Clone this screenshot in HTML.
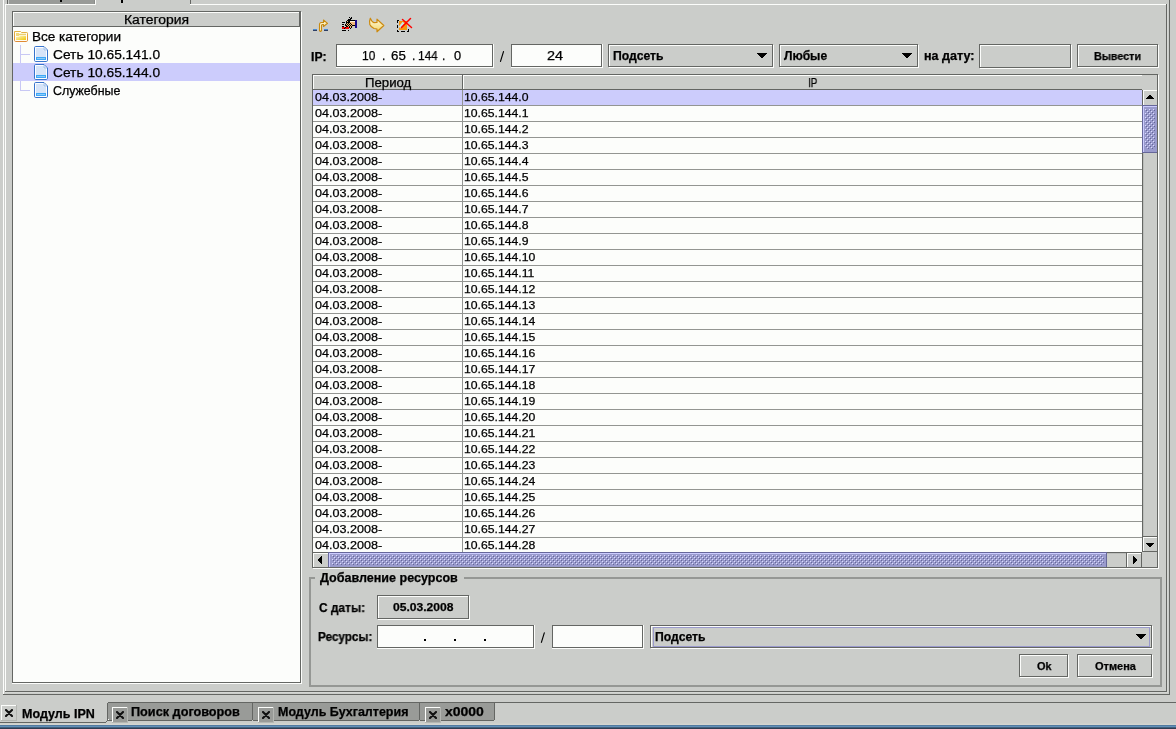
<!DOCTYPE html>
<html><head><meta charset="utf-8"><style>
html,body{margin:0;padding:0;width:1176px;height:729px;overflow:hidden;background:#cbcdca;position:relative}
body>div,body>svg,body>span{position:absolute}
.t{font-family:"Liberation Sans",sans-serif;white-space:pre;color:#000;transform-origin:0 0;will-change:transform;-webkit-text-stroke:0.25px #000}
</style></head><body>
<svg width="0" height="0" style="left:0;top:0"><defs><pattern id="bumps" width="4" height="4" patternUnits="userSpaceOnUse"><rect x="0" y="0" width="1" height="1" fill="#dcdcff"/><rect x="1" y="1" width="1" height="1" fill="#66679a"/><rect x="2" y="2" width="1" height="1" fill="#dcdcff"/><rect x="3" y="3" width="1" height="1" fill="#66679a"/></pattern></defs></svg>
<div style="left:3px;top:0px;width:1px;height:695px;background:#fcfdfb;"></div><div style="left:3px;top:694px;width:1167px;height:1px;background:#646663;"></div><div style="left:1169px;top:0px;width:1px;height:695px;background:#646663;"></div><div style="left:1167px;top:4px;width:1px;height:689px;background:#d5d7d4;"></div><div style="left:5px;top:692px;width:1163px;height:1px;background:#d5d7d4;"></div><div style="left:5px;top:4px;width:1px;height:688px;background:#fcfdfb;"></div><div style="left:5px;top:691px;width:1162px;height:1px;background:#646663;"></div><div style="left:1166px;top:4px;width:1px;height:688px;background:#646663;"></div><div style="left:7px;top:0px;width:88px;height:4px;background:#999b98;"></div><div style="left:7px;top:0px;width:1px;height:4px;background:#646663;"></div><div style="left:8px;top:0px;width:1px;height:4px;background:#c9cbc8;"></div><div style="left:94px;top:0px;width:1px;height:4px;background:#8a8c89;"></div><div style="left:95px;top:0px;width:1px;height:5px;background:#fcfdfb;"></div><div style="left:5px;top:4px;width:91px;height:1px;background:#fcfdfb;"></div><div style="left:190px;top:4px;width:976px;height:1px;background:#fcfdfb;"></div><div style="left:190px;top:0px;width:1px;height:4px;background:#646663;"></div><div style="left:60px;top:0px;width:2px;height:2px;background:#000;"></div><div style="left:121px;top:0px;width:2px;height:3px;background:#000;"></div><div style="left:13px;top:12px;width:287px;height:670px;background:#fcfdfb;"></div><div style="left:12px;top:11px;width:289px;height:1px;background:#646663;"></div><div style="left:12px;top:682px;width:289px;height:1px;background:#646663;"></div><div style="left:12px;top:11px;width:1px;height:672px;background:#646663;"></div><div style="left:300px;top:11px;width:1px;height:672px;background:#646663;"></div><div style="left:301px;top:12px;width:1px;height:672px;background:#fcfdfb;"></div><div style="left:12px;top:683px;width:290px;height:1px;background:#fcfdfb;"></div><div style="left:13px;top:12px;width:287px;height:15px;background:#cbcdca;"></div><div style="left:13px;top:12px;width:286px;height:1px;background:#fcfdfb;"></div><div style="left:13px;top:12px;width:1px;height:14px;background:#fcfdfb;"></div><div style="left:13px;top:26px;width:287px;height:1px;background:#646663;"></div><div style="left:299px;top:12px;width:1px;height:15px;background:#646663;"></div><div style="left:13px;top:63px;width:287px;height:18px;background:#ccccfc;"></div><div style="left:20px;top:45px;width:1px;height:18px;background:#c8c8f4;"></div><div style="left:21px;top:54px;width:9px;height:1px;background:#c8c8f4;"></div><div style="left:20px;top:81px;width:1px;height:10px;background:#c8c8f4;"></div><div style="left:21px;top:90px;width:9px;height:1px;background:#c8c8f4;"></div><div style="left:336px;top:44px;width:158px;height:24px;background:#fcfdfb;"></div><div style="left:337px;top:45px;width:157px;height:1px;background:#fcfdfb;"></div><div style="left:337px;top:67px;width:157px;height:1px;background:#fcfdfb;"></div><div style="left:337px;top:45px;width:1px;height:23px;background:#fcfdfb;"></div><div style="left:493px;top:45px;width:1px;height:23px;background:#fcfdfb;"></div><div style="left:336px;top:44px;width:157px;height:1px;background:#646663;"></div><div style="left:336px;top:66px;width:157px;height:1px;background:#646663;"></div><div style="left:336px;top:44px;width:1px;height:23px;background:#646663;"></div><div style="left:492px;top:44px;width:1px;height:23px;background:#646663;"></div><div style="left:338px;top:46px;width:154px;height:20px;background:#fcfdfb;"></div><svg style="left:496px;top:48px" width="12" height="16"><line x1="7.5" y1="3.6" x2="4.5" y2="13.4" stroke="#000" stroke-width="1.15" stroke-linecap="round"/></svg><div style="left:511px;top:44px;width:92px;height:24px;background:#fcfdfb;"></div><div style="left:512px;top:45px;width:91px;height:1px;background:#fcfdfb;"></div><div style="left:512px;top:67px;width:91px;height:1px;background:#fcfdfb;"></div><div style="left:512px;top:45px;width:1px;height:23px;background:#fcfdfb;"></div><div style="left:602px;top:45px;width:1px;height:23px;background:#fcfdfb;"></div><div style="left:511px;top:44px;width:91px;height:1px;background:#646663;"></div><div style="left:511px;top:66px;width:91px;height:1px;background:#646663;"></div><div style="left:511px;top:44px;width:1px;height:23px;background:#646663;"></div><div style="left:601px;top:44px;width:1px;height:23px;background:#646663;"></div><div style="left:513px;top:46px;width:88px;height:20px;background:#fcfdfb;"></div><div style="left:608px;top:44px;width:166px;height:24px;background:#cbcdca;"></div><div style="left:609px;top:45px;width:165px;height:1px;background:#fcfdfb;"></div><div style="left:609px;top:67px;width:165px;height:1px;background:#fcfdfb;"></div><div style="left:609px;top:45px;width:1px;height:23px;background:#fcfdfb;"></div><div style="left:773px;top:45px;width:1px;height:23px;background:#fcfdfb;"></div><div style="left:608px;top:44px;width:165px;height:1px;background:#646663;"></div><div style="left:608px;top:66px;width:165px;height:1px;background:#646663;"></div><div style="left:608px;top:44px;width:1px;height:23px;background:#646663;"></div><div style="left:772px;top:44px;width:1px;height:23px;background:#646663;"></div><div style="left:610px;top:46px;width:162px;height:20px;background:#cbcdca;"></div><div style="left:757px;top:53px;width:10px;height:1px;background:#000;"></div><div style="left:758px;top:54px;width:8px;height:1px;background:#000;"></div><div style="left:759px;top:55px;width:6px;height:1px;background:#000;"></div><div style="left:760px;top:56px;width:4px;height:1px;background:#000;"></div><div style="left:761px;top:57px;width:2px;height:1px;background:#000;"></div><div style="left:779px;top:44px;width:140px;height:24px;background:#cbcdca;"></div><div style="left:780px;top:45px;width:139px;height:1px;background:#fcfdfb;"></div><div style="left:780px;top:67px;width:139px;height:1px;background:#fcfdfb;"></div><div style="left:780px;top:45px;width:1px;height:23px;background:#fcfdfb;"></div><div style="left:918px;top:45px;width:1px;height:23px;background:#fcfdfb;"></div><div style="left:779px;top:44px;width:139px;height:1px;background:#646663;"></div><div style="left:779px;top:66px;width:139px;height:1px;background:#646663;"></div><div style="left:779px;top:44px;width:1px;height:23px;background:#646663;"></div><div style="left:917px;top:44px;width:1px;height:23px;background:#646663;"></div><div style="left:781px;top:46px;width:136px;height:20px;background:#cbcdca;"></div><div style="left:902px;top:53px;width:10px;height:1px;background:#000;"></div><div style="left:903px;top:54px;width:8px;height:1px;background:#000;"></div><div style="left:904px;top:55px;width:6px;height:1px;background:#000;"></div><div style="left:905px;top:56px;width:4px;height:1px;background:#000;"></div><div style="left:906px;top:57px;width:2px;height:1px;background:#000;"></div><div style="left:979px;top:44px;width:93px;height:25px;background:#cbcdca;"></div><div style="left:980px;top:45px;width:92px;height:1px;background:#fcfdfb;"></div><div style="left:980px;top:68px;width:92px;height:1px;background:#fcfdfb;"></div><div style="left:980px;top:45px;width:1px;height:24px;background:#fcfdfb;"></div><div style="left:1071px;top:45px;width:1px;height:24px;background:#fcfdfb;"></div><div style="left:979px;top:44px;width:92px;height:1px;background:#646663;"></div><div style="left:979px;top:67px;width:92px;height:1px;background:#646663;"></div><div style="left:979px;top:44px;width:1px;height:24px;background:#646663;"></div><div style="left:1070px;top:44px;width:1px;height:24px;background:#646663;"></div><div style="left:981px;top:46px;width:89px;height:21px;background:#cbcdca;"></div><div style="left:1077px;top:44px;width:82px;height:24px;background:#cbcdca;"></div><div style="left:1078px;top:45px;width:81px;height:1px;background:#fcfdfb;"></div><div style="left:1078px;top:67px;width:81px;height:1px;background:#fcfdfb;"></div><div style="left:1078px;top:45px;width:1px;height:23px;background:#fcfdfb;"></div><div style="left:1158px;top:45px;width:1px;height:23px;background:#fcfdfb;"></div><div style="left:1077px;top:44px;width:81px;height:1px;background:#646663;"></div><div style="left:1077px;top:66px;width:81px;height:1px;background:#646663;"></div><div style="left:1077px;top:44px;width:1px;height:23px;background:#646663;"></div><div style="left:1157px;top:44px;width:1px;height:23px;background:#646663;"></div><div style="left:1079px;top:46px;width:78px;height:20px;background:#cbcdca;"></div><div style="left:313px;top:75px;width:844px;height:492px;background:#fcfdfb;"></div><div style="left:312px;top:74px;width:846px;height:1px;background:#646663;"></div><div style="left:312px;top:567px;width:846px;height:1px;background:#646663;"></div><div style="left:312px;top:74px;width:1px;height:494px;background:#646663;"></div><div style="left:1157px;top:74px;width:1px;height:494px;background:#646663;"></div><div style="left:1158px;top:75px;width:1px;height:494px;background:#fcfdfb;"></div><div style="left:313px;top:568px;width:846px;height:1px;background:#fcfdfb;"></div><div style="left:313px;top:75px;width:844px;height:15px;background:#cbcdca;"></div><div style="left:313px;top:75px;width:829px;height:1px;background:#fcfdfb;"></div><div style="left:313px;top:75px;width:1px;height:14px;background:#fcfdfb;"></div><div style="left:313px;top:89px;width:829px;height:1px;background:#646663;"></div><div style="left:462px;top:75px;width:1px;height:15px;background:#646663;"></div><div style="left:463px;top:76px;width:1px;height:13px;background:#fcfdfb;"></div><div style="left:313px;top:90px;width:829px;height:15px;background:#ccccfc;"></div><div style="left:313px;top:105px;width:829px;height:1px;background:#939592;"></div><div style="left:313px;top:121px;width:829px;height:1px;background:#939592;"></div><div style="left:313px;top:137px;width:829px;height:1px;background:#939592;"></div><div style="left:313px;top:153px;width:829px;height:1px;background:#939592;"></div><div style="left:313px;top:169px;width:829px;height:1px;background:#939592;"></div><div style="left:313px;top:185px;width:829px;height:1px;background:#939592;"></div><div style="left:313px;top:201px;width:829px;height:1px;background:#939592;"></div><div style="left:313px;top:217px;width:829px;height:1px;background:#939592;"></div><div style="left:313px;top:233px;width:829px;height:1px;background:#939592;"></div><div style="left:313px;top:249px;width:829px;height:1px;background:#939592;"></div><div style="left:313px;top:265px;width:829px;height:1px;background:#939592;"></div><div style="left:313px;top:281px;width:829px;height:1px;background:#939592;"></div><div style="left:313px;top:297px;width:829px;height:1px;background:#939592;"></div><div style="left:313px;top:313px;width:829px;height:1px;background:#939592;"></div><div style="left:313px;top:329px;width:829px;height:1px;background:#939592;"></div><div style="left:313px;top:345px;width:829px;height:1px;background:#939592;"></div><div style="left:313px;top:361px;width:829px;height:1px;background:#939592;"></div><div style="left:313px;top:377px;width:829px;height:1px;background:#939592;"></div><div style="left:313px;top:393px;width:829px;height:1px;background:#939592;"></div><div style="left:313px;top:409px;width:829px;height:1px;background:#939592;"></div><div style="left:313px;top:425px;width:829px;height:1px;background:#939592;"></div><div style="left:313px;top:441px;width:829px;height:1px;background:#939592;"></div><div style="left:313px;top:457px;width:829px;height:1px;background:#939592;"></div><div style="left:313px;top:473px;width:829px;height:1px;background:#939592;"></div><div style="left:313px;top:489px;width:829px;height:1px;background:#939592;"></div><div style="left:313px;top:505px;width:829px;height:1px;background:#939592;"></div><div style="left:313px;top:521px;width:829px;height:1px;background:#939592;"></div><div style="left:313px;top:537px;width:829px;height:1px;background:#939592;"></div><div style="left:462px;top:90px;width:1px;height:462px;background:#939592;"></div><div style="left:1142px;top:90px;width:15px;height:462px;background:#cbcdca;"></div><div style="left:1142px;top:90px;width:1px;height:462px;background:#646663;"></div><div style="left:1143px;top:105px;width:1px;height:431px;background:#babcb9;"></div><div style="left:1143px;top:90px;width:14px;height:1px;background:#fcfdfb;"></div><div style="left:1143px;top:90px;width:1px;height:15px;background:#fcfdfb;"></div><div style="left:1149px;top:95px;width:2px;height:1px;background:#000;"></div><div style="left:1148px;top:96px;width:4px;height:1px;background:#000;"></div><div style="left:1147px;top:97px;width:6px;height:1px;background:#000;"></div><div style="left:1146px;top:98px;width:8px;height:1px;background:#000;"></div><div style="left:1142px;top:105px;width:15px;height:48px;background:#9a9bcd;"></div><div style="left:1142px;top:105px;width:15px;height:1px;background:#66679a;"></div><div style="left:1142px;top:105px;width:1px;height:48px;background:#66679a;"></div><div style="left:1142px;top:152px;width:15px;height:1px;background:#66679a;"></div><div style="left:1143px;top:106px;width:14px;height:1px;background:#ccccff;"></div><div style="left:1143px;top:106px;width:1px;height:46px;background:#ccccff;"></div><svg style="left:1145px;top:109px" width="10" height="40"><rect width="10" height="40" fill="url(#bumps)"/></svg><div style="left:1142px;top:536px;width:15px;height:1px;background:#646663;"></div><div style="left:1143px;top:537px;width:14px;height:1px;background:#fcfdfb;"></div><div style="left:1143px;top:537px;width:1px;height:15px;background:#fcfdfb;"></div><div style="left:1142px;top:551px;width:15px;height:1px;background:#646663;"></div><div style="left:1146px;top:543px;width:8px;height:1px;background:#000;"></div><div style="left:1147px;top:544px;width:6px;height:1px;background:#000;"></div><div style="left:1148px;top:545px;width:4px;height:1px;background:#000;"></div><div style="left:1149px;top:546px;width:2px;height:1px;background:#000;"></div><div style="left:313px;top:552px;width:844px;height:15px;background:#cbcdca;"></div><div style="left:313px;top:552px;width:844px;height:1px;background:#646663;"></div><div style="left:328px;top:553px;width:798px;height:1px;background:#babcb9;"></div><div style="left:313px;top:553px;width:15px;height:1px;background:#fcfdfb;"></div><div style="left:313px;top:553px;width:1px;height:14px;background:#fcfdfb;"></div><div style="left:318px;top:559px;width:1px;height:2px;background:#000;"></div><div style="left:319px;top:558px;width:1px;height:4px;background:#000;"></div><div style="left:320px;top:557px;width:1px;height:6px;background:#000;"></div><div style="left:321px;top:556px;width:1px;height:8px;background:#000;"></div><div style="left:328px;top:552px;width:779px;height:15px;background:#9a9bcd;"></div><div style="left:328px;top:552px;width:779px;height:1px;background:#66679a;"></div><div style="left:328px;top:552px;width:1px;height:15px;background:#66679a;"></div><div style="left:1106px;top:552px;width:1px;height:15px;background:#66679a;"></div><div style="left:329px;top:553px;width:777px;height:1px;background:#ccccff;"></div><div style="left:329px;top:553px;width:1px;height:14px;background:#ccccff;"></div><svg style="left:332px;top:555px" width="772" height="10"><rect width="772" height="10" fill="url(#bumps)"/></svg><div style="left:1126px;top:552px;width:1px;height:15px;background:#646663;"></div><div style="left:1127px;top:553px;width:1px;height:14px;background:#fcfdfb;"></div><div style="left:1127px;top:553px;width:15px;height:1px;background:#fcfdfb;"></div><div style="left:1141px;top:552px;width:1px;height:15px;background:#646663;"></div><div style="left:1133px;top:556px;width:1px;height:8px;background:#000;"></div><div style="left:1134px;top:557px;width:1px;height:6px;background:#000;"></div><div style="left:1135px;top:558px;width:1px;height:4px;background:#000;"></div><div style="left:1136px;top:559px;width:1px;height:2px;background:#000;"></div><div style="left:1142px;top:552px;width:15px;height:15px;background:#cbcdca;"></div><div style="left:309px;top:577px;width:2px;height:110px;background:#959794;"></div><div style="left:1160px;top:577px;width:2px;height:110px;background:#959794;"></div><div style="left:309px;top:685px;width:853px;height:2px;background:#959794;"></div><div style="left:309px;top:577px;width:6px;height:2px;background:#959794;"></div><div style="left:464px;top:577px;width:698px;height:2px;background:#959794;"></div><div style="left:377px;top:595px;width:93px;height:25px;background:#cbcdca;"></div><div style="left:378px;top:596px;width:92px;height:1px;background:#fcfdfb;"></div><div style="left:378px;top:619px;width:92px;height:1px;background:#fcfdfb;"></div><div style="left:378px;top:596px;width:1px;height:24px;background:#fcfdfb;"></div><div style="left:469px;top:596px;width:1px;height:24px;background:#fcfdfb;"></div><div style="left:377px;top:595px;width:92px;height:1px;background:#646663;"></div><div style="left:377px;top:618px;width:92px;height:1px;background:#646663;"></div><div style="left:377px;top:595px;width:1px;height:24px;background:#646663;"></div><div style="left:468px;top:595px;width:1px;height:24px;background:#646663;"></div><div style="left:379px;top:597px;width:89px;height:21px;background:#cbcdca;"></div><div style="left:377px;top:625px;width:158px;height:24px;background:#fcfdfb;"></div><div style="left:378px;top:626px;width:157px;height:1px;background:#fcfdfb;"></div><div style="left:378px;top:648px;width:157px;height:1px;background:#fcfdfb;"></div><div style="left:378px;top:626px;width:1px;height:23px;background:#fcfdfb;"></div><div style="left:534px;top:626px;width:1px;height:23px;background:#fcfdfb;"></div><div style="left:377px;top:625px;width:157px;height:1px;background:#646663;"></div><div style="left:377px;top:647px;width:157px;height:1px;background:#646663;"></div><div style="left:377px;top:625px;width:1px;height:23px;background:#646663;"></div><div style="left:533px;top:625px;width:1px;height:23px;background:#646663;"></div><div style="left:379px;top:627px;width:154px;height:20px;background:#fcfdfb;"></div><div style="left:424px;top:639px;width:2px;height:2px;background:#000;"></div><div style="left:454px;top:639px;width:2px;height:2px;background:#000;"></div><div style="left:484px;top:639px;width:2px;height:2px;background:#000;"></div><svg style="left:537px;top:629px" width="12" height="16"><line x1="7.3" y1="3.8" x2="4.4" y2="13.3" stroke="#000" stroke-width="1.15" stroke-linecap="round"/></svg><div style="left:552px;top:625px;width:92px;height:24px;background:#fcfdfb;"></div><div style="left:553px;top:626px;width:91px;height:1px;background:#fcfdfb;"></div><div style="left:553px;top:648px;width:91px;height:1px;background:#fcfdfb;"></div><div style="left:553px;top:626px;width:1px;height:23px;background:#fcfdfb;"></div><div style="left:643px;top:626px;width:1px;height:23px;background:#fcfdfb;"></div><div style="left:552px;top:625px;width:91px;height:1px;background:#646663;"></div><div style="left:552px;top:647px;width:91px;height:1px;background:#646663;"></div><div style="left:552px;top:625px;width:1px;height:23px;background:#646663;"></div><div style="left:642px;top:625px;width:1px;height:23px;background:#646663;"></div><div style="left:554px;top:627px;width:88px;height:20px;background:#fcfdfb;"></div><div style="left:650px;top:625px;width:503px;height:24px;background:#cbcdca;"></div><div style="left:651px;top:626px;width:502px;height:1px;background:#fcfdfb;"></div><div style="left:651px;top:648px;width:502px;height:1px;background:#fcfdfb;"></div><div style="left:651px;top:626px;width:1px;height:23px;background:#fcfdfb;"></div><div style="left:1152px;top:626px;width:1px;height:23px;background:#fcfdfb;"></div><div style="left:650px;top:625px;width:502px;height:1px;background:#646663;"></div><div style="left:650px;top:647px;width:502px;height:1px;background:#646663;"></div><div style="left:650px;top:625px;width:1px;height:23px;background:#646663;"></div><div style="left:1151px;top:625px;width:1px;height:23px;background:#646663;"></div><div style="left:652px;top:627px;width:499px;height:20px;background:#cbcdca;"></div><div style="left:653px;top:627px;width:497px;height:1px;background:#9999cc;"></div><div style="left:653px;top:646px;width:497px;height:1px;background:#9999cc;"></div><div style="left:653px;top:627px;width:1px;height:20px;background:#9999cc;"></div><div style="left:1149px;top:627px;width:1px;height:20px;background:#9999cc;"></div><div style="left:1136px;top:634px;width:10px;height:1px;background:#000;"></div><div style="left:1137px;top:635px;width:8px;height:1px;background:#000;"></div><div style="left:1138px;top:636px;width:6px;height:1px;background:#000;"></div><div style="left:1139px;top:637px;width:4px;height:1px;background:#000;"></div><div style="left:1140px;top:638px;width:2px;height:1px;background:#000;"></div><div style="left:1019px;top:654px;width:50px;height:24px;background:#cbcdca;"></div><div style="left:1020px;top:655px;width:49px;height:1px;background:#fcfdfb;"></div><div style="left:1020px;top:677px;width:49px;height:1px;background:#fcfdfb;"></div><div style="left:1020px;top:655px;width:1px;height:23px;background:#fcfdfb;"></div><div style="left:1068px;top:655px;width:1px;height:23px;background:#fcfdfb;"></div><div style="left:1019px;top:654px;width:49px;height:1px;background:#646663;"></div><div style="left:1019px;top:676px;width:49px;height:1px;background:#646663;"></div><div style="left:1019px;top:654px;width:1px;height:23px;background:#646663;"></div><div style="left:1067px;top:654px;width:1px;height:23px;background:#646663;"></div><div style="left:1021px;top:656px;width:46px;height:20px;background:#cbcdca;"></div><div style="left:1077px;top:654px;width:76px;height:24px;background:#cbcdca;"></div><div style="left:1078px;top:655px;width:75px;height:1px;background:#fcfdfb;"></div><div style="left:1078px;top:677px;width:75px;height:1px;background:#fcfdfb;"></div><div style="left:1078px;top:655px;width:1px;height:23px;background:#fcfdfb;"></div><div style="left:1152px;top:655px;width:1px;height:23px;background:#fcfdfb;"></div><div style="left:1077px;top:654px;width:75px;height:1px;background:#646663;"></div><div style="left:1077px;top:676px;width:75px;height:1px;background:#646663;"></div><div style="left:1077px;top:654px;width:1px;height:23px;background:#646663;"></div><div style="left:1151px;top:654px;width:1px;height:23px;background:#646663;"></div><div style="left:1079px;top:656px;width:72px;height:20px;background:#cbcdca;"></div><div style="left:108px;top:702px;width:1069px;height:1px;background:#646663;"></div><div style="left:107px;top:703px;width:146px;height:17px;background:#999b98;"></div><div style="left:107px;top:720px;width:145px;height:1px;background:#646663;"></div><div style="left:252px;top:703px;width:1px;height:17px;background:#646663;"></div><div style="left:112px;top:707px;width:16px;height:16px;background:#999b98;"></div><div style="left:112px;top:707px;width:16px;height:1px;background:#fcfdfb;"></div><div style="left:112px;top:707px;width:1px;height:16px;background:#fcfdfb;"></div><div style="left:112px;top:722px;width:16px;height:1px;background:#b4b6b2;"></div><div style="left:127px;top:707px;width:1px;height:16px;background:#b4b6b2;"></div><svg style="left:116px;top:711px" width="8" height="8"><path d="M1,1 L7,7 M7,1 L1,7" stroke="#111" stroke-width="2.1" stroke-linecap="round"/></svg><div style="left:253px;top:703px;width:1px;height:17px;background:#fcfdfb;"></div><div style="left:253px;top:703px;width:167px;height:17px;background:#999b98;"></div><div style="left:253px;top:720px;width:166px;height:1px;background:#646663;"></div><div style="left:419px;top:703px;width:1px;height:17px;background:#646663;"></div><div style="left:258px;top:707px;width:16px;height:16px;background:#999b98;"></div><div style="left:258px;top:707px;width:16px;height:1px;background:#fcfdfb;"></div><div style="left:258px;top:707px;width:1px;height:16px;background:#fcfdfb;"></div><div style="left:258px;top:722px;width:16px;height:1px;background:#b4b6b2;"></div><div style="left:273px;top:707px;width:1px;height:16px;background:#b4b6b2;"></div><svg style="left:262px;top:711px" width="8" height="8"><path d="M1,1 L7,7 M7,1 L1,7" stroke="#111" stroke-width="2.1" stroke-linecap="round"/></svg><div style="left:420px;top:703px;width:1px;height:17px;background:#fcfdfb;"></div><div style="left:420px;top:703px;width:75px;height:17px;background:#999b98;"></div><div style="left:420px;top:720px;width:74px;height:1px;background:#646663;"></div><div style="left:494px;top:703px;width:1px;height:17px;background:#646663;"></div><div style="left:425px;top:707px;width:16px;height:16px;background:#999b98;"></div><div style="left:425px;top:707px;width:16px;height:1px;background:#fcfdfb;"></div><div style="left:425px;top:707px;width:1px;height:16px;background:#fcfdfb;"></div><div style="left:425px;top:722px;width:16px;height:1px;background:#b4b6b2;"></div><div style="left:440px;top:707px;width:1px;height:16px;background:#b4b6b2;"></div><svg style="left:429px;top:711px" width="8" height="8"><path d="M1,1 L7,7 M7,1 L1,7" stroke="#111" stroke-width="2.1" stroke-linecap="round"/></svg><div style="left:107px;top:703px;width:1px;height:17px;background:#646663;"></div><div style="left:0px;top:722px;width:106px;height:1px;background:#646663;"></div><div style="left:106px;top:721px;width:1px;height:1px;background:#646663;"></div><div style="left:108px;top:719px;width:1px;height:1px;background:#fcfdfb;"></div><div style="left:1px;top:705px;width:16px;height:16px;background:#cbcdca;"></div><div style="left:1px;top:705px;width:16px;height:1px;background:#fcfdfb;"></div><div style="left:1px;top:705px;width:1px;height:16px;background:#fcfdfb;"></div><div style="left:1px;top:720px;width:16px;height:1px;background:#b4b6b2;"></div><div style="left:16px;top:705px;width:1px;height:16px;background:#b4b6b2;"></div><svg style="left:5px;top:709px" width="8" height="8"><path d="M1,1 L7,7 M7,1 L1,7" stroke="#111" stroke-width="2.1" stroke-linecap="round"/></svg><div style="left:0px;top:723px;width:1177px;height:1px;background:#cfd1cc;"></div><div style="left:0px;top:724px;width:1177px;height:1px;background:#d4d5d0;"></div><div style="left:0px;top:725px;width:1177px;height:1px;background:#527aa0;"></div><div style="left:0px;top:726px;width:1177px;height:1px;background:#6292b9;"></div><div style="left:0px;top:727px;width:1177px;height:1px;background:#445f7d;"></div><div style="left:0px;top:728px;width:1177px;height:1px;background:#2e3d52;"></div><span class="t" style="left:124.04px;top:14px;font-size:12px;line-height:12px;font-weight:400;transform:scaleX(1.1593)">Категория</span><span class="t" style="left:32.47px;top:31px;font-size:12px;line-height:12px;font-weight:400;transform:scaleX(1.1286)">Все категории</span><span class="t" style="left:52.65px;top:49px;font-size:12px;line-height:12px;font-weight:400;transform:scaleX(1.1457)">Сеть 10.65.141.0</span><span class="t" style="left:52.65px;top:67px;font-size:12px;line-height:12px;font-weight:400;transform:scaleX(1.1457)">Сеть 10.65.144.0</span><span class="t" style="left:52.77px;top:85px;font-size:12px;line-height:12px;font-weight:400;transform:scaleX(1.0328)">Служебные</span><span class="t" style="left:311.38px;top:51px;font-size:12px;line-height:12px;font-weight:700;transform:scaleX(1.0154)">IP:</span><span class="t" style="left:361.71px;top:50px;font-size:12px;line-height:12px;font-weight:400;transform:scaleX(0.9917)">10</span><span class="t" style="left:381.80px;top:50px;font-size:12px;line-height:12px;font-weight:400;transform:scaleX(1.0000)">.</span><span class="t" style="left:390.59px;top:50px;font-size:12px;line-height:12px;font-weight:400;transform:scaleX(1.1083)">65</span><span class="t" style="left:411.70px;top:50px;font-size:12px;line-height:12px;font-weight:400;transform:scaleX(1.0000)">.</span><span class="t" style="left:418.12px;top:50px;font-size:12px;line-height:12px;font-weight:400;transform:scaleX(0.9842)">144</span><span class="t" style="left:441.50px;top:50px;font-size:12px;line-height:12px;font-weight:400;transform:scaleX(1.0000)">.</span><span class="t" style="left:454.40px;top:50px;font-size:12px;line-height:12px;font-weight:400;transform:scaleX(1.0667)">0</span><span class="t" style="left:547.40px;top:50px;font-size:12px;line-height:12px;font-weight:400;transform:scaleX(1.2000)">24</span><span class="t" style="left:612.98px;top:50px;font-size:12px;line-height:12px;font-weight:700;transform:scaleX(1.0167)">Подсеть</span><span class="t" style="left:784.00px;top:50px;font-size:12px;line-height:12px;font-weight:700;transform:scaleX(1.0070)">Любые</span><span class="t" style="left:923.85px;top:50px;font-size:12px;line-height:12px;font-weight:700;transform:scaleX(1.0478)">на дату:</span><span class="t" style="left:1094.23px;top:51px;font-size:11px;line-height:11px;font-weight:700;transform:scaleX(0.9745)">Вывести</span><span class="t" style="left:364.80px;top:77px;font-size:12px;line-height:12px;font-weight:400;transform:scaleX(1.1000)">Период</span><span class="t" style="left:808.07px;top:77px;font-size:12px;line-height:12px;font-weight:400;transform:scaleX(0.8300)">IP</span><span class="t" style="left:314.70px;top:92px;font-size:11px;line-height:11px;font-weight:400;transform:scaleX(1.1431)">04.03.2008-</span><span class="t" style="left:463.59px;top:92px;font-size:11px;line-height:11px;font-weight:400;transform:scaleX(1.1105)">10.65.144.0</span><span class="t" style="left:314.70px;top:108px;font-size:11px;line-height:11px;font-weight:400;transform:scaleX(1.1431)">04.03.2008-</span><span class="t" style="left:463.59px;top:108px;font-size:11px;line-height:11px;font-weight:400;transform:scaleX(1.1105)">10.65.144.1</span><span class="t" style="left:314.70px;top:124px;font-size:11px;line-height:11px;font-weight:400;transform:scaleX(1.1431)">04.03.2008-</span><span class="t" style="left:463.59px;top:124px;font-size:11px;line-height:11px;font-weight:400;transform:scaleX(1.1105)">10.65.144.2</span><span class="t" style="left:314.70px;top:140px;font-size:11px;line-height:11px;font-weight:400;transform:scaleX(1.1431)">04.03.2008-</span><span class="t" style="left:463.59px;top:140px;font-size:11px;line-height:11px;font-weight:400;transform:scaleX(1.1105)">10.65.144.3</span><span class="t" style="left:314.70px;top:156px;font-size:11px;line-height:11px;font-weight:400;transform:scaleX(1.1431)">04.03.2008-</span><span class="t" style="left:463.59px;top:156px;font-size:11px;line-height:11px;font-weight:400;transform:scaleX(1.1105)">10.65.144.4</span><span class="t" style="left:314.70px;top:172px;font-size:11px;line-height:11px;font-weight:400;transform:scaleX(1.1431)">04.03.2008-</span><span class="t" style="left:463.59px;top:172px;font-size:11px;line-height:11px;font-weight:400;transform:scaleX(1.1105)">10.65.144.5</span><span class="t" style="left:314.70px;top:188px;font-size:11px;line-height:11px;font-weight:400;transform:scaleX(1.1431)">04.03.2008-</span><span class="t" style="left:463.59px;top:188px;font-size:11px;line-height:11px;font-weight:400;transform:scaleX(1.1105)">10.65.144.6</span><span class="t" style="left:314.70px;top:204px;font-size:11px;line-height:11px;font-weight:400;transform:scaleX(1.1431)">04.03.2008-</span><span class="t" style="left:463.59px;top:204px;font-size:11px;line-height:11px;font-weight:400;transform:scaleX(1.1105)">10.65.144.7</span><span class="t" style="left:314.70px;top:220px;font-size:11px;line-height:11px;font-weight:400;transform:scaleX(1.1431)">04.03.2008-</span><span class="t" style="left:463.59px;top:220px;font-size:11px;line-height:11px;font-weight:400;transform:scaleX(1.1105)">10.65.144.8</span><span class="t" style="left:314.70px;top:236px;font-size:11px;line-height:11px;font-weight:400;transform:scaleX(1.1431)">04.03.2008-</span><span class="t" style="left:463.59px;top:236px;font-size:11px;line-height:11px;font-weight:400;transform:scaleX(1.1105)">10.65.144.9</span><span class="t" style="left:314.70px;top:252px;font-size:11px;line-height:11px;font-weight:400;transform:scaleX(1.1431)">04.03.2008-</span><span class="t" style="left:463.59px;top:252px;font-size:11px;line-height:11px;font-weight:400;transform:scaleX(1.1105)">10.65.144.10</span><span class="t" style="left:314.70px;top:268px;font-size:11px;line-height:11px;font-weight:400;transform:scaleX(1.1431)">04.03.2008-</span><span class="t" style="left:463.59px;top:268px;font-size:11px;line-height:11px;font-weight:400;transform:scaleX(1.1105)">10.65.144.11</span><span class="t" style="left:314.70px;top:284px;font-size:11px;line-height:11px;font-weight:400;transform:scaleX(1.1431)">04.03.2008-</span><span class="t" style="left:463.59px;top:284px;font-size:11px;line-height:11px;font-weight:400;transform:scaleX(1.1105)">10.65.144.12</span><span class="t" style="left:314.70px;top:300px;font-size:11px;line-height:11px;font-weight:400;transform:scaleX(1.1431)">04.03.2008-</span><span class="t" style="left:463.59px;top:300px;font-size:11px;line-height:11px;font-weight:400;transform:scaleX(1.1105)">10.65.144.13</span><span class="t" style="left:314.70px;top:316px;font-size:11px;line-height:11px;font-weight:400;transform:scaleX(1.1431)">04.03.2008-</span><span class="t" style="left:463.59px;top:316px;font-size:11px;line-height:11px;font-weight:400;transform:scaleX(1.1105)">10.65.144.14</span><span class="t" style="left:314.70px;top:332px;font-size:11px;line-height:11px;font-weight:400;transform:scaleX(1.1431)">04.03.2008-</span><span class="t" style="left:463.59px;top:332px;font-size:11px;line-height:11px;font-weight:400;transform:scaleX(1.1105)">10.65.144.15</span><span class="t" style="left:314.70px;top:348px;font-size:11px;line-height:11px;font-weight:400;transform:scaleX(1.1431)">04.03.2008-</span><span class="t" style="left:463.59px;top:348px;font-size:11px;line-height:11px;font-weight:400;transform:scaleX(1.1105)">10.65.144.16</span><span class="t" style="left:314.70px;top:364px;font-size:11px;line-height:11px;font-weight:400;transform:scaleX(1.1431)">04.03.2008-</span><span class="t" style="left:463.59px;top:364px;font-size:11px;line-height:11px;font-weight:400;transform:scaleX(1.1105)">10.65.144.17</span><span class="t" style="left:314.70px;top:380px;font-size:11px;line-height:11px;font-weight:400;transform:scaleX(1.1431)">04.03.2008-</span><span class="t" style="left:463.59px;top:380px;font-size:11px;line-height:11px;font-weight:400;transform:scaleX(1.1105)">10.65.144.18</span><span class="t" style="left:314.70px;top:396px;font-size:11px;line-height:11px;font-weight:400;transform:scaleX(1.1431)">04.03.2008-</span><span class="t" style="left:463.59px;top:396px;font-size:11px;line-height:11px;font-weight:400;transform:scaleX(1.1105)">10.65.144.19</span><span class="t" style="left:314.70px;top:412px;font-size:11px;line-height:11px;font-weight:400;transform:scaleX(1.1431)">04.03.2008-</span><span class="t" style="left:463.59px;top:412px;font-size:11px;line-height:11px;font-weight:400;transform:scaleX(1.1105)">10.65.144.20</span><span class="t" style="left:314.70px;top:428px;font-size:11px;line-height:11px;font-weight:400;transform:scaleX(1.1431)">04.03.2008-</span><span class="t" style="left:463.59px;top:428px;font-size:11px;line-height:11px;font-weight:400;transform:scaleX(1.1105)">10.65.144.21</span><span class="t" style="left:314.70px;top:444px;font-size:11px;line-height:11px;font-weight:400;transform:scaleX(1.1431)">04.03.2008-</span><span class="t" style="left:463.59px;top:444px;font-size:11px;line-height:11px;font-weight:400;transform:scaleX(1.1105)">10.65.144.22</span><span class="t" style="left:314.70px;top:460px;font-size:11px;line-height:11px;font-weight:400;transform:scaleX(1.1431)">04.03.2008-</span><span class="t" style="left:463.59px;top:460px;font-size:11px;line-height:11px;font-weight:400;transform:scaleX(1.1105)">10.65.144.23</span><span class="t" style="left:314.70px;top:476px;font-size:11px;line-height:11px;font-weight:400;transform:scaleX(1.1431)">04.03.2008-</span><span class="t" style="left:463.59px;top:476px;font-size:11px;line-height:11px;font-weight:400;transform:scaleX(1.1105)">10.65.144.24</span><span class="t" style="left:314.70px;top:492px;font-size:11px;line-height:11px;font-weight:400;transform:scaleX(1.1431)">04.03.2008-</span><span class="t" style="left:463.59px;top:492px;font-size:11px;line-height:11px;font-weight:400;transform:scaleX(1.1105)">10.65.144.25</span><span class="t" style="left:314.70px;top:508px;font-size:11px;line-height:11px;font-weight:400;transform:scaleX(1.1431)">04.03.2008-</span><span class="t" style="left:463.59px;top:508px;font-size:11px;line-height:11px;font-weight:400;transform:scaleX(1.1105)">10.65.144.26</span><span class="t" style="left:314.70px;top:524px;font-size:11px;line-height:11px;font-weight:400;transform:scaleX(1.1431)">04.03.2008-</span><span class="t" style="left:463.59px;top:524px;font-size:11px;line-height:11px;font-weight:400;transform:scaleX(1.1105)">10.65.144.27</span><span class="t" style="left:314.70px;top:540px;font-size:11px;line-height:11px;font-weight:400;transform:scaleX(1.1431)">04.03.2008-</span><span class="t" style="left:463.59px;top:540px;font-size:11px;line-height:11px;font-weight:400;transform:scaleX(1.1105)">10.65.144.28</span><span class="t" style="left:320.20px;top:572px;font-size:12px;line-height:12px;font-weight:700;transform:scaleX(1.0447)">Добавление ресурсов</span><span class="t" style="left:318.80px;top:602px;font-size:12px;line-height:12px;font-weight:700;transform:scaleX(0.9913)">С даты:</span><span class="t" style="left:392.90px;top:602px;font-size:11px;line-height:11px;font-weight:700;transform:scaleX(1.0982)">05.03.2008</span><span class="t" style="left:317.83px;top:631px;font-size:12px;line-height:12px;font-weight:700;transform:scaleX(0.9741)">Ресурсы:</span><span class="t" style="left:654.98px;top:631px;font-size:12px;line-height:12px;font-weight:700;transform:scaleX(1.0167)">Подсеть</span><span class="t" style="left:1036.80px;top:661px;font-size:11px;line-height:11px;font-weight:700;transform:scaleX(0.9867)">Ok</span><span class="t" style="left:1094.70px;top:661px;font-size:11px;line-height:11px;font-weight:700;transform:scaleX(0.9976)">Отмена</span><span class="t" style="left:131.04px;top:706px;font-size:12px;line-height:12px;font-weight:700;transform:scaleX(1.0569)">Поиск договоров</span><span class="t" style="left:277.86px;top:706px;font-size:12px;line-height:12px;font-weight:700;transform:scaleX(1.0411)">Модуль Бухгалтерия</span><span class="t" style="left:444.90px;top:706px;font-size:12px;line-height:12px;font-weight:700;transform:scaleX(1.1636)">x0000</span><span class="t" style="left:21.96px;top:708px;font-size:12px;line-height:12px;font-weight:700;transform:scaleX(1.0441)">Модуль IPN</span>
<svg style="left:13px;top:29px" width="16" height="14" viewBox="0 0 16 14">
<defs><linearGradient id="fo" x1="0" y1="0" x2="0" y2="1"><stop offset="0" stop-color="#e4b444"/><stop offset="1" stop-color="#e08a34"/></linearGradient>
<linearGradient id="ff" x1="0" y1="0" x2="1" y2="1"><stop offset="0" stop-color="#fcf4c4"/><stop offset="1" stop-color="#f0c808"/></linearGradient></defs>
<path d="M1.5,11.3 V2.5 H7.5 L8.5,3.5 H13.8 Q14.5,3.5 14.5,4.2 V11.3 Q14.5,12.5 13.3,12.5 H2.7 Q1.5,12.5 1.5,11.3 Z" fill="#fffef6" stroke="url(#fo)" stroke-width="1"/>
<rect x="3" y="4" width="10" height="3" fill="#fbf3d2"/>
<rect x="3" y="4" width="3" height="3" fill="#f2d87a"/>
<rect x="6" y="5" width="7" height="1" fill="#ecd070"/>
<path d="M3,8 L6,7.6 L7.5,7 H13 V11 H3 Z" fill="url(#ff)"/>
</svg>
<svg style="left:312px;top:18px" width="18" height="15" viewBox="0 0 18 15">
<rect x="1" y="11" width="4" height="2" fill="#2c3f66"/><rect x="1" y="11" width="4" height="1" fill="#4a8ad0"/>
<rect x="12" y="11" width="4" height="2" fill="#2c3f66"/><rect x="12" y="11" width="4" height="1" fill="#4a8ad0"/>
<path d="M7.5,12.8 L8.5,13.5 L9.5,12.8 V7.5 Q9.5,6.5 10.5,6.5 H11.5 V8.5 L15.5,5.3 L11.5,2 V4.5 H9.5 Q7.5,4.5 7.5,6.5 Z" fill="#fcf0c0" stroke="#c88a10" stroke-width="1.1" stroke-linejoin="round"/>
</svg><svg style="left:340px;top:15px" width="17" height="16" viewBox="0 0 17 16" shape-rendering="crispEdges"><rect x="9" y="2" width="1" height="1" fill="#000000"/><rect x="11" y="2" width="1" height="1" fill="#000000"/><rect x="10" y="3" width="1" height="1" fill="#000000"/><rect x="11" y="3" width="1" height="1" fill="#000000"/><rect x="8" y="4" width="1" height="1" fill="#000000"/><rect x="9" y="4" width="1" height="1" fill="#000000"/><rect x="10" y="4" width="1" height="1" fill="#000000"/><rect x="7" y="5" width="1" height="1" fill="#000000"/><rect x="8" y="5" width="1" height="1" fill="#000000"/><rect x="9" y="5" width="1" height="1" fill="#000000"/><rect x="10" y="5" width="1" height="1" fill="#000000"/><rect x="11" y="5" width="1" height="1" fill="#000000"/><rect x="12" y="5" width="1" height="1" fill="#000000"/><rect x="13" y="5" width="1" height="1" fill="#000000"/><rect x="14" y="5" width="1" height="1" fill="#000000"/><rect x="15" y="5" width="1" height="1" fill="#1c0a8c"/><rect x="16" y="5" width="1" height="1" fill="#1c0a8c"/><rect x="6" y="6" width="1" height="1" fill="#000000"/><rect x="7" y="6" width="1" height="1" fill="#f4b878"/><rect x="8" y="6" width="1" height="1" fill="#000000"/><rect x="9" y="6" width="1" height="1" fill="#000000"/><rect x="10" y="6" width="1" height="1" fill="#fff4e0"/><rect x="11" y="6" width="1" height="1" fill="#fff4e0"/><rect x="12" y="6" width="1" height="1" fill="#fff4e0"/><rect x="13" y="6" width="1" height="1" fill="#fff4e0"/><rect x="14" y="6" width="1" height="1" fill="#fff4e0"/><rect x="15" y="6" width="1" height="1" fill="#1c0a8c"/><rect x="16" y="6" width="1" height="1" fill="#1c0a8c"/><rect x="2" y="7" width="1" height="1" fill="#000000"/><rect x="3" y="7" width="1" height="1" fill="#000000"/><rect x="4" y="7" width="1" height="1" fill="#000000"/><rect x="6" y="7" width="1" height="1" fill="#000000"/><rect x="7" y="7" width="1" height="1" fill="#000000"/><rect x="8" y="7" width="1" height="1" fill="#000000"/><rect x="9" y="7" width="1" height="1" fill="#000000"/><rect x="10" y="7" width="1" height="1" fill="#f4b878"/><rect x="11" y="7" width="1" height="1" fill="#f4b878"/><rect x="12" y="7" width="1" height="1" fill="#f4b878"/><rect x="13" y="7" width="1" height="1" fill="#f4b878"/><rect x="14" y="7" width="1" height="1" fill="#f4b878"/><rect x="15" y="7" width="1" height="1" fill="#1c0a8c"/><rect x="16" y="7" width="1" height="1" fill="#1c0a8c"/><rect x="6" y="8" width="1" height="1" fill="#000000"/><rect x="7" y="8" width="1" height="1" fill="#f4b878"/><rect x="8" y="8" width="1" height="1" fill="#000000"/><rect x="9" y="8" width="1" height="1" fill="#f4b878"/><rect x="10" y="8" width="1" height="1" fill="#000000"/><rect x="11" y="8" width="1" height="1" fill="#f4b878"/><rect x="12" y="8" width="1" height="1" fill="#f4b878"/><rect x="13" y="8" width="1" height="1" fill="#f4b878"/><rect x="14" y="8" width="1" height="1" fill="#f4b878"/><rect x="15" y="8" width="1" height="1" fill="#1c0a8c"/><rect x="16" y="8" width="1" height="1" fill="#1c0a8c"/><rect x="2" y="9" width="1" height="1" fill="#000000"/><rect x="3" y="9" width="1" height="1" fill="#000000"/><rect x="5" y="9" width="1" height="1" fill="#000000"/><rect x="6" y="9" width="1" height="1" fill="#f4b878"/><rect x="7" y="9" width="1" height="1" fill="#000000"/><rect x="8" y="9" width="1" height="1" fill="#f4b878"/><rect x="9" y="9" width="1" height="1" fill="#000000"/><rect x="10" y="9" width="1" height="1" fill="#f4b878"/><rect x="11" y="9" width="1" height="1" fill="#000000"/><rect x="12" y="9" width="1" height="1" fill="#f4b878"/><rect x="13" y="9" width="1" height="1" fill="#f4b878"/><rect x="14" y="9" width="1" height="1" fill="#f4b878"/><rect x="15" y="9" width="1" height="1" fill="#1c0a8c"/><rect x="16" y="9" width="1" height="1" fill="#1c0a8c"/><rect x="5" y="10" width="1" height="1" fill="#000000"/><rect x="6" y="10" width="1" height="1" fill="#000000"/><rect x="7" y="10" width="1" height="1" fill="#f4b878"/><rect x="8" y="10" width="1" height="1" fill="#000000"/><rect x="9" y="10" width="1" height="1" fill="#f4b878"/><rect x="10" y="10" width="1" height="1" fill="#000000"/><rect x="11" y="10" width="1" height="1" fill="#f4b878"/><rect x="12" y="10" width="1" height="1" fill="#000000"/><rect x="13" y="10" width="1" height="1" fill="#000000"/><rect x="14" y="10" width="1" height="1" fill="#000000"/><rect x="15" y="10" width="1" height="1" fill="#1c0a8c"/><rect x="16" y="10" width="1" height="1" fill="#1c0a8c"/><rect x="2" y="11" width="1" height="1" fill="#000000"/><rect x="3" y="11" width="1" height="1" fill="#000000"/><rect x="6" y="11" width="1" height="1" fill="#000000"/><rect x="7" y="11" width="1" height="1" fill="#000000"/><rect x="8" y="11" width="1" height="1" fill="#f4b878"/><rect x="9" y="11" width="1" height="1" fill="#000000"/><rect x="10" y="11" width="1" height="1" fill="#f4b878"/><rect x="11" y="11" width="1" height="1" fill="#000000"/><rect x="12" y="11" width="1" height="1" fill="#f4b878"/><rect x="15" y="11" width="1" height="1" fill="#1c0a8c"/><rect x="16" y="11" width="1" height="1" fill="#1c0a8c"/><rect x="2" y="12" width="1" height="1" fill="#ff0000"/><rect x="3" y="12" width="1" height="1" fill="#ff0000"/><rect x="4" y="12" width="1" height="1" fill="#ff0000"/><rect x="5" y="12" width="1" height="1" fill="#000000"/><rect x="6" y="12" width="1" height="1" fill="#ff0000"/><rect x="7" y="12" width="1" height="1" fill="#ff0000"/><rect x="8" y="12" width="1" height="1" fill="#ff0000"/><rect x="9" y="12" width="1" height="1" fill="#000000"/><rect x="10" y="12" width="1" height="1" fill="#f4b878"/><rect x="11" y="12" width="1" height="1" fill="#000000"/><rect x="15" y="12" width="1" height="1" fill="#1c0a8c"/><rect x="16" y="12" width="1" height="1" fill="#1c0a8c"/><rect x="2" y="13" width="1" height="1" fill="#ff0000"/><rect x="3" y="13" width="1" height="1" fill="#ff0000"/><rect x="4" y="13" width="1" height="1" fill="#000000"/><rect x="5" y="13" width="1" height="1" fill="#ff0000"/><rect x="6" y="13" width="1" height="1" fill="#ff0000"/><rect x="7" y="13" width="1" height="1" fill="#ff0000"/><rect x="8" y="13" width="1" height="1" fill="#ff0000"/><rect x="10" y="13" width="1" height="1" fill="#000000"/><rect x="2" y="15" width="1" height="1" fill="#000000"/><rect x="3" y="15" width="1" height="1" fill="#000000"/><rect x="4" y="15" width="1" height="1" fill="#000000"/><rect x="5" y="15" width="1" height="1" fill="#000000"/><rect x="8" y="15" width="1" height="1" fill="#000000"/></svg><svg style="left:368px;top:17px" width="17" height="16" viewBox="0 0 17 16">
<defs><linearGradient id="ag" x1="0" y1="0" x2="0" y2="1"><stop offset="0" stop-color="#fffbe0"/><stop offset="1" stop-color="#f3d66a"/></linearGradient></defs>
<path d="M2.3,1.2 Q1,4 1.8,7.5 Q2.8,10 6,11.5 L9,12 V14.8 L15.8,8.5 L9,2.2 V5.5 L6,5.6 Q4,5.2 2.3,1.2 Z" fill="url(#ag)" stroke="#cc8a10" stroke-width="1.2" stroke-linejoin="round"/>
</svg><svg style="left:395px;top:16px" width="18" height="17" viewBox="0 0 18 17" shape-rendering="crispEdges">
<rect x="4" y="5" width="8" height="9" fill="#f7940f"/>
<path d="M4.5,11.5 L8.5,6.5" stroke="#c8e4ea" stroke-width="2.2" shape-rendering="auto"/>
<rect x="2" y="4" width="2" height="1" fill="#000"/><rect x="2" y="4" width="1" height="3" fill="#000"/>
<rect x="2" y="9" width="1" height="3" fill="#000"/>
<rect x="2" y="14" width="1" height="2" fill="#000"/><rect x="2" y="15" width="2" height="1" fill="#000"/>
<rect x="6" y="15" width="4" height="1" fill="#000"/>
<rect x="12" y="15" width="2" height="1" fill="#000"/><rect x="13" y="13" width="1" height="3" fill="#000"/>
<path d="M7.5,3.5 L16.5,11.5 M15.5,2.5 L6.5,11.5" stroke="#ff0000" stroke-width="1.5" stroke-linecap="round" shape-rendering="auto"/>
</svg><svg style="left:34px;top:46px" width="14" height="16" viewBox="0 0 14 16">
<path d="M0.5,1.7 Q0.5,0.5 1.7,0.5 H10 L13.5,4 V14.3 Q13.5,15.5 12.3,15.5 H1.7 Q0.5,15.5 0.5,14.3 Z" fill="#fdfeff" stroke="#3874cc" stroke-width="1"/>
<path d="M2,2 H9.5 V4.5 H12 V11 H2 Z" fill="#d6e4f8"/>
<path d="M10,1.2 V4 H12.8" fill="#eef4fc" stroke="#7aa6e0" stroke-width="0.7"/>
<rect x="2" y="11" width="10" height="3" fill="#3ea8f6"/>
<rect x="3" y="12" width="8" height="1" fill="#8ccbfa"/>
</svg><svg style="left:34px;top:64px" width="14" height="16" viewBox="0 0 14 16">
<path d="M0.5,1.7 Q0.5,0.5 1.7,0.5 H10 L13.5,4 V14.3 Q13.5,15.5 12.3,15.5 H1.7 Q0.5,15.5 0.5,14.3 Z" fill="#fdfeff" stroke="#3874cc" stroke-width="1"/>
<path d="M2,2 H9.5 V4.5 H12 V11 H2 Z" fill="#d6e4f8"/>
<path d="M10,1.2 V4 H12.8" fill="#eef4fc" stroke="#7aa6e0" stroke-width="0.7"/>
<rect x="2" y="11" width="10" height="3" fill="#3ea8f6"/>
<rect x="3" y="12" width="8" height="1" fill="#8ccbfa"/>
</svg><svg style="left:34px;top:82px" width="14" height="16" viewBox="0 0 14 16">
<path d="M0.5,1.7 Q0.5,0.5 1.7,0.5 H10 L13.5,4 V14.3 Q13.5,15.5 12.3,15.5 H1.7 Q0.5,15.5 0.5,14.3 Z" fill="#fdfeff" stroke="#3874cc" stroke-width="1"/>
<path d="M2,2 H9.5 V4.5 H12 V11 H2 Z" fill="#d6e4f8"/>
<path d="M10,1.2 V4 H12.8" fill="#eef4fc" stroke="#7aa6e0" stroke-width="0.7"/>
<rect x="2" y="11" width="10" height="3" fill="#3ea8f6"/>
<rect x="3" y="12" width="8" height="1" fill="#8ccbfa"/>
</svg>
</body></html>
